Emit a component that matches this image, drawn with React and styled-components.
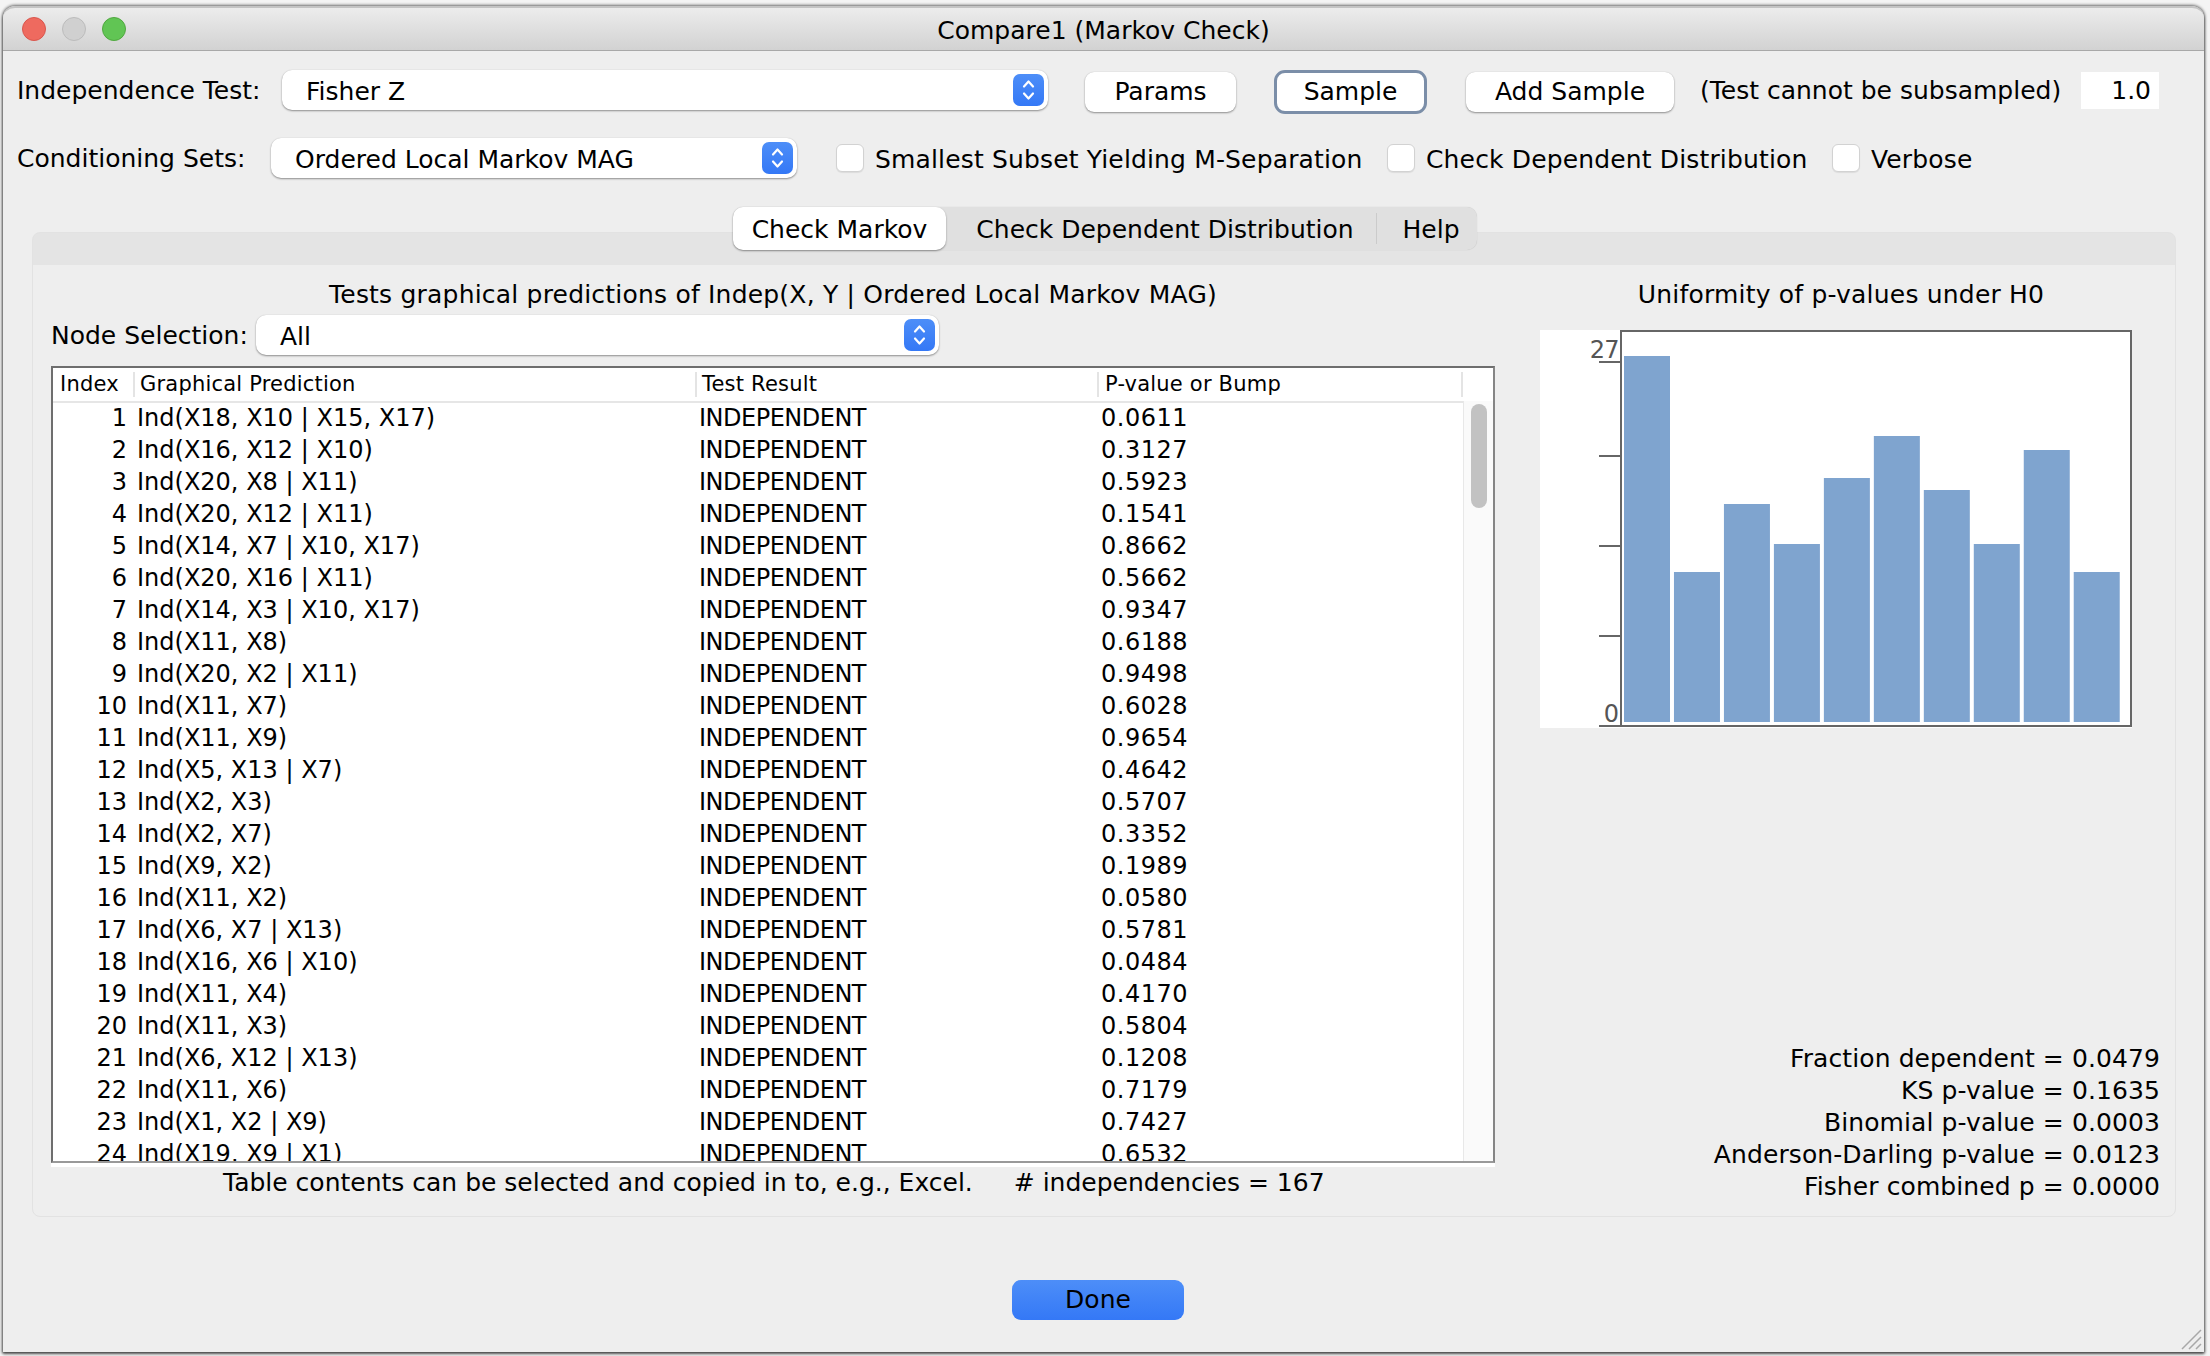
import React from 'react'
import styled, { createGlobalStyle } from 'styled-components'

const GlobalStyle = createGlobalStyle`
  html, body {
    margin: 0;
    background: #f4f4f4;
    font-family: "DejaVu Sans", "Liberation Sans", sans-serif;
    font-size: 25px;
    color: #000;
  }
`

const Screen = styled.div`
  box-sizing: border-box;
  width: 2210px;
  height: 1356px;
  padding: 6px 6px 4px 3px;
  overflow: hidden;
`

const Window = styled.div`
  position: relative;
  display: flex;
  flex-direction: column;
  height: 100%;
  background: #eeeeee;
  border-radius: 12px 12px 0 0;
  box-shadow: 0 0 3px 1px rgba(0, 0, 0, 0.55), 0 2px 3px rgba(0, 0, 0, 0.5);
`

const TitleBar = styled.div`
  box-sizing: border-box;
  display: grid;
  grid-template-columns: 1fr auto 1fr;
  align-items: center;
  height: 45px;
  padding: 0 19px;
  background: linear-gradient(#ececec, #d2d2d2);
  border-top: 2px solid #c4c4c4;
  border-bottom: 1px solid #a8a8a8;
  border-radius: 12px 12px 0 0;
`

const Lights = styled.div`
  display: flex;
  gap: 16px;
`

const Light = styled.span`
  box-sizing: border-box;
  width: 24px;
  height: 24px;
  border-radius: 50%;
  background: ${p => p.$color};
  border: 1px solid ${p => p.$edge};
`

const Title = styled.div`
  padding-top: 2px;
`

const Row = styled.div`
  display: flex;
  align-items: flex-start;
  height: ${p => p.$height}px;
  margin-top: ${p => p.$top}px;
  padding-left: 14px;
`

const Label = styled.div`
  flex: none;
  width: ${p => p.$width}px;
  line-height: 42px;
  white-space: nowrap;
`

const ComboBox = styled.div`
  box-sizing: border-box;
  flex: none;
  display: flex;
  align-items: center;
  justify-content: space-between;
  width: ${p => p.$width}px;
  height: 40px;
  padding: 0 4px 0 24px;
  background: #fff;
  border-radius: 10px;
  box-shadow: 0 1px 2px rgba(0, 0, 0, 0.4), 0 0 1px rgba(0, 0, 0, 0.15);
`

const ComboText = styled.span`
  padding-top: 2px;
`

const StepperBox = styled.span`
  display: flex;
  width: 31px;
  height: 32px;
  border-radius: 7px;
  background: linear-gradient(#4d8ef8, #3478f6);
`

const PushButton = styled.button`
  box-sizing: border-box;
  flex: none;
  width: ${p => p.$width}px;
  height: ${p => (p.$focused ? 44 : 40)}px;
  margin-top: ${p => (p.$focused ? 0 : 2)}px;
  margin-left: ${p => p.$left}px;
  padding: 0 0 2px;
  background: #fff;
  border: ${p => (p.$focused ? '3px solid #7b8ea8' : '0')};
  border-radius: ${p => (p.$focused ? 11 : 9)}px;
  box-shadow: ${p => (p.$focused ? 'none' : '0 1px 2px rgba(0, 0, 0, 0.4), 0 0 1px rgba(0, 0, 0, 0.15)')};
  font: inherit;
  color: #000;
`

const Hint = styled.div`
  flex: none;
  width: 381px;
  margin-left: 26px;
  line-height: 42px;
  white-space: nowrap;
`

const SampleField = styled.div`
  box-sizing: border-box;
  flex: none;
  width: 78px;
  height: 37px;
  margin-top: 2px;
  padding-right: 8px;
  background: #fff;
  line-height: 37px;
  text-align: right;
`

const CheckItem = styled.label`
  flex: none;
  display: flex;
  align-items: center;
  width: ${p => p.$width}px;
  height: 42px;
  letter-spacing: 0.15px;
  white-space: nowrap;
`

const CheckBox = styled.span`
  box-sizing: border-box;
  flex: none;
  width: 28px;
  height: 28px;
  margin: -2px 11px 0 0;
  background: #fff;
  border: 1px solid #d2d2d2;
  border-radius: 6px;
  box-shadow: 0 1px 1px rgba(0, 0, 0, 0.08);
`

const CheckGroup = styled.div`
  display: flex;
  margin-left: 39px;
`

const TabStrip = styled.div`
  position: relative;
  z-index: 1;
  align-self: flex-start;
  display: flex;
  align-items: stretch;
  height: 43px;
  margin: 29px 0 0 730px;
  background: #e0e0e0;
  border-radius: 10px;
  box-shadow: 0 0 1px rgba(0, 0, 0, 0.2);
`

const Tab = styled.div`
  box-sizing: border-box;
  width: ${p => p.$width}px;
  padding-left: ${p => p.$pad || 0}px;
  line-height: 45px;
  text-align: center;
  ${p => p.$active && 'background: #fff; border-radius: 10px; box-shadow: 0 1px 2px rgba(0, 0, 0, 0.4);'}
  ${p => p.$divided && 'border-left: 1px solid #cbcbcb; margin: 6px 0; line-height: 33px;'}
`

const Panel = styled.div`
  box-sizing: border-box;
  display: grid;
  grid-template-columns: 1444px 620px;
  column-gap: 45px;
  height: 985px;
  margin: -18px 28px 0 29px;
  padding: 46px 15px 13px 18px;
  background: linear-gradient(#e4e4e4 0 32px, #eeeeee 32px);
  border: 1px solid #e2e2e2;
  border-radius: 8px;
`

const Column = styled.div`
  display: flex;
  flex-direction: column;
  min-width: 0;
`

const Heading = styled.div`
  padding-right: ${p => p.$inset || 0}px;
  line-height: 32px;
  text-align: center;
  letter-spacing: 0.2px;
`

const NodeRow = styled.div`
  display: flex;
  height: 40px;
  margin-top: 4px;
`

const TableBox = styled.div`
  box-sizing: border-box;
  display: flex;
  flex-direction: column;
  height: 797px;
  margin-top: 11px;
  background: #fff;
  border: 2px solid #6e6e6e;
  border-right-color: #858585;
  border-bottom-color: #999;
  box-shadow: 0 4px 0 #fff;
`

const TableHead = styled.div`
  flex: none;
  display: flex;
  height: 33px;
  font-size: 21px;
  line-height: 33px;
  letter-spacing: 0.2px;
`

const HeadCell = styled.div`
  box-sizing: border-box;
  width: ${p => p.$width}px;
  padding-left: ${p => p.$pad}px;
  white-space: nowrap;
  ${p => p.$divided && 'border-left: 2px solid #e4e4e4; margin: 4px 0; line-height: 25px;'}
`

const TableBody = styled.div`
  flex: 1;
  display: flex;
  min-height: 0;
`

const Rows = styled.div`
  width: 1410px;
  overflow: hidden;
  border-top: 2px solid #e6e6e6;
  font-size: 24px;
`

const TableRow = styled.div`
  display: grid;
  grid-template-columns: 80px 562px 402px 366px;
  height: 32px;
  line-height: 31px;
  white-space: nowrap;
`

const IndexCell = styled.div`
  padding-right: 6px;
  text-align: right;
`

const TextCell = styled.div`
  padding-left: 4px;
  letter-spacing: ${p => p.$spacing || 0};
`

const ScrollTrack = styled.div`
  flex: 1;
  padding: 3px 6px 0 7px;
  background: #fafafa;
  border-left: 1px solid #e8e8e8;
`

const ScrollThumb = styled.div`
  height: 104px;
  background: #c2c2c2;
  border-radius: 8px;
`

const Note = styled.div`
  display: flex;
  gap: 41px;
  margin-top: 4px;
  padding-left: 172px;
  line-height: 32px;
  white-space: nowrap;
`

const ChartBox = styled.div`
  width: 592px;
  height: 398px;
  margin-top: 19px;
`

const Stats = styled.div`
  margin-top: auto;
  line-height: 32px;
  text-align: right;
  letter-spacing: 0.1px;
`

const DoneButton = styled.button`
  align-self: flex-start;
  width: 172px;
  height: 40px;
  margin: 63px 0 0 1009px;
  padding: 0 0 2px;
  background: linear-gradient(#4d8ef8, #3478f6);
  border: 0;
  border-radius: 9px;
  font: inherit;
  color: #000;
`

const Grip = styled.svg`
  position: absolute;
  right: 2px;
  bottom: 2px;
`

const rows = [
  ['Ind(X18, X10 | X15, X17)', '0.0611'],
  ['Ind(X16, X12 | X10)', '0.3127'],
  ['Ind(X20, X8 | X11)', '0.5923'],
  ['Ind(X20, X12 | X11)', '0.1541'],
  ['Ind(X14, X7 | X10, X17)', '0.8662'],
  ['Ind(X20, X16 | X11)', '0.5662'],
  ['Ind(X14, X3 | X10, X17)', '0.9347'],
  ['Ind(X11, X8)', '0.6188'],
  ['Ind(X20, X2 | X11)', '0.9498'],
  ['Ind(X11, X7)', '0.6028'],
  ['Ind(X11, X9)', '0.9654'],
  ['Ind(X5, X13 | X7)', '0.4642'],
  ['Ind(X2, X3)', '0.5707'],
  ['Ind(X2, X7)', '0.3352'],
  ['Ind(X9, X2)', '0.1989'],
  ['Ind(X11, X2)', '0.0580'],
  ['Ind(X6, X7 | X13)', '0.5781'],
  ['Ind(X16, X6 | X10)', '0.0484'],
  ['Ind(X11, X4)', '0.4170'],
  ['Ind(X11, X3)', '0.5804'],
  ['Ind(X6, X12 | X13)', '0.1208'],
  ['Ind(X11, X6)', '0.7179'],
  ['Ind(X1, X2 | X9)', '0.7427'],
  ['Ind(X19, X9 | X1)', '0.6532'],
]

const stats = [
  'Fraction dependent = 0.0479',
  'KS p-value = 0.1635',
  'Binomial p-value = 0.0003',
  'Anderson-Darling p-value = 0.0123',
  'Fisher combined p = 0.0000',
]

// tops of the histogram bars, measured from the top of the chart
const barTops = [26, 242, 174, 214, 148, 106, 160, 214, 120, 242]
const ticks = [32, 126, 216, 306, 396]

function Stepper() {
  return (
    <StepperBox>
      <svg width="31" height="32" viewBox="0 0 31 32" fill="none" stroke="#fff" strokeWidth="2.2" strokeLinecap="round" strokeLinejoin="round">
        <path d="M11 12.5 L15.5 7.5 L20 12.5" />
        <path d="M11 19.5 L15.5 24.5 L20 19.5" />
      </svg>
    </StepperBox>
  )
}

function Histogram() {
  return (
    <svg width="592" height="398" viewBox="0 0 592 398">
      <rect width="592" height="398" fill="#fff" />
      {barTops.map((top, i) => (
        <rect key={i} x={84 + i * 49.97} y={top} width="46" height={392 - top} fill="#7fa4cf" />
      ))}
      <rect x="81" y="1" width="510" height="395" fill="none" stroke="#666" strokeWidth="2" />
      {ticks.map(y => (
        <line key={y} x1="59" x2="80" y1={y} y2={y} stroke="#666" strokeWidth="2" />
      ))}
      <text x="79" y="28" textAnchor="end" fontSize="24" fill="#555" letterSpacing="-0.6">27</text>
      <text x="79" y="392" textAnchor="end" fontSize="24" fill="#555">0</text>
    </svg>
  )
}

export default function App() {
  return (
    <Screen>
      <GlobalStyle />
      <Window>
        <TitleBar>
          <Lights>
            <Light $color="#ee6a5f" $edge="#d9564d" />
            <Light $color="#d0d0d0" $edge="#bcbcbc" />
            <Light $color="#61c554" $edge="#50a83f" />
          </Lights>
          <Title>Compare1 (Markov Check)</Title>
        </TitleBar>

        <Row $height={44} $top={19}>
          <Label $width={265}>Independence Test:</Label>
          <ComboBox $width={766}><ComboText>Fisher Z</ComboText><Stepper /></ComboBox>
          <PushButton $width={151} $left={37}>Params</PushButton>
          <PushButton $width={153} $left={38} $focused>Sample</PushButton>
          <PushButton $width={208} $left={39}>Add Sample</PushButton>
          <Hint>(Test cannot be subsampled)</Hint>
          <SampleField>1.0</SampleField>
        </Row>

        <Row $height={40} $top={24}>
          <Label $width={254}>Conditioning Sets:</Label>
          <ComboBox $width={526}><ComboText>Ordered Local Markov MAG</ComboText><Stepper /></ComboBox>
          <CheckGroup>
            <CheckItem $width={551}><CheckBox />Smallest Subset Yielding M-Separation</CheckItem>
            <CheckItem $width={445}><CheckBox />Check Dependent Distribution</CheckItem>
            <CheckItem $width={160}><CheckBox />Verbose</CheckItem>
          </CheckGroup>
        </Row>

        <TabStrip>
          <Tab $width={213} $active>Check Markov</Tab>
          <Tab $width={430} $pad={8}>Check Dependent Distribution</Tab>
          <Tab $width={101} $pad={8} $divided>Help</Tab>
        </TabStrip>

        <Panel>
          <Column>
            <Heading>Tests graphical predictions of Indep(X, Y | Ordered Local Markov MAG)</Heading>
            <NodeRow>
              <Label $width={205}>Node Selection:</Label>
              <ComboBox $width={683}><ComboText>All</ComboText><Stepper /></ComboBox>
            </NodeRow>
            <TableBox>
              <TableHead>
                <HeadCell $width={80} $pad={7}>Index</HeadCell>
                <HeadCell $width={562} $pad={5} $divided>Graphical Prediction</HeadCell>
                <HeadCell $width={402} $pad={5} $divided>Test Result</HeadCell>
                <HeadCell $width={364} $pad={6} $divided>P-value or Bump</HeadCell>
                <HeadCell $width={32} $divided />
              </TableHead>
              <TableBody>
                <Rows>
                  {rows.map(([prediction, value], i) => (
                    <TableRow key={i}>
                      <IndexCell>{i + 1}</IndexCell>
                      <TextCell>{prediction}</TextCell>
                      <TextCell $spacing="-0.5px">INDEPENDENT</TextCell>
                      <TextCell $spacing="0.5px">{value}</TextCell>
                    </TableRow>
                  ))}
                </Rows>
                <ScrollTrack><ScrollThumb /></ScrollTrack>
              </TableBody>
            </TableBox>
            <Note>
              <span>Table contents can be selected and copied in to, e.g., Excel.</span>
              <span># independencies = 167</span>
            </Note>
          </Column>
          <Column>
            <Heading $inset={18}>Uniformity of p-values under H0</Heading>
            <ChartBox><Histogram /></ChartBox>
            <Stats>
              {stats.map(line => <div key={line}>{line}</div>)}
            </Stats>
          </Column>
        </Panel>

        <DoneButton>Done</DoneButton>

        <Grip width="22" height="22" viewBox="0 0 22 22" stroke="#a8a8a8" strokeWidth="1.5">
          <path d="M2 21 L21 2 M9 21 L21 9 M16 21 L21 16" />
        </Grip>
      </Window>
    </Screen>
  )
}
